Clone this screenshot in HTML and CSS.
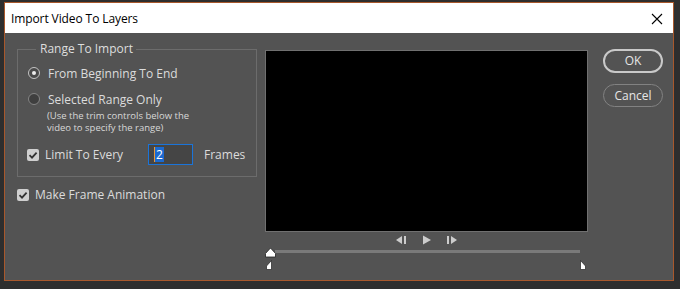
FILE: index.html
```html
<!DOCTYPE html>
<html lang="en">
<head>
    <meta charset="UTF-8">
    <title>Import Video To Layers</title>
    <link rel="stylesheet" href="styles.css">
</head>
<body>

<div class="dialog">

    <div class="titlebar">
        <span class="title">Import Video To Layers</span>
        <svg class="close" width="12" height="12" viewBox="0 0 12 12">
            <path d="M1 1 L11 11 M11 1 L1 11" stroke="#000" stroke-width="1.1" fill="none"/>
        </svg>
    </div>

    <div class="content">

        <div class="leftpane">

            <fieldset class="group">
                <legend>Range To Import</legend>

                <div class="row radioRow">
                    <span class="radio on"></span>
                    <span>From Beginning To End</span>
                </div>

                <div class="row radioRow second">
                    <span class="radio"></span>
                    <span>Selected Range Only</span>
                </div>
                <div class="note">(Use the trim controls below the<br>video to specify the range)</div>

                <div class="row limitRow">
                    <span class="check"><svg width="12" height="12" viewBox="0 0 12 12"><path d="M2.5 6.2 L5 8.6 L9.6 3.6" stroke="#333" stroke-width="1.8" fill="none"/></svg></span>
                    <span class="limitLabel">Limit To Every</span>
                    <span class="numBox"><span class="sel">2</span></span>
                    <span>Frames</span>
                </div>
            </fieldset>

            <div class="row animRow">
                <span class="check"><svg width="12" height="12" viewBox="0 0 12 12"><path d="M2.5 6.2 L5 8.6 L9.6 3.6" stroke="#333" stroke-width="1.8" fill="none"/></svg></span>
                <span>Make Frame Animation</span>
            </div>

        </div>

        <div class="middlepane">
            <div class="video"></div>

            <div class="transport">
                <svg width="12" height="10" viewBox="0 0 12 10"><path d="M0 5 L6 1 L6 9 Z" fill="#ccc"/><rect x="8" y="1" width="2" height="8" fill="#ccc"/></svg>
                <svg width="10" height="10" viewBox="0 0 10 10"><path d="M1 0.5 L9 5 L1 9.5 Z" fill="#ccc"/></svg>
                <svg width="12" height="10" viewBox="0 0 12 10"><rect x="1" y="1" width="2" height="8" fill="#ccc"/><path d="M5 1 L11 5 L5 9 Z" fill="#ccc"/></svg>
            </div>

            <div class="slider">
                <div class="track"></div>
                <svg class="thumb" width="13" height="11" viewBox="0 0 13 11"><path d="M1.5 10 L1.5 6.5 L6.5 1 L11.5 6.5 L11.5 10 Z" fill="#fff" stroke="#222" stroke-width="0.8"/></svg>
            </div>

            <div class="trims">
                <svg width="6" height="10" viewBox="0 0 6 10"><path d="M5.5 0.5 L5.5 9.5 L0.5 9.5 L0.5 6 Z" fill="#fff" stroke="#222" stroke-width="0.7"/></svg>
                <svg width="6" height="10" viewBox="0 0 6 10"><path d="M0.5 0.5 L0.5 9.5 L5.5 9.5 L5.5 6 Z" fill="#fff" stroke="#222" stroke-width="0.7"/></svg>
            </div>
        </div>

        <div class="rightpane">
            <div class="btn primary">OK</div>
            <div class="btn">Cancel</div>
        </div>

    </div>

</div>

</body>
</html>
```

FILE: styles.css
```css
body {
    margin: 0;
    background-color: #2e2e2e;
    font-family: "Open Sans", "Noto Sans", sans-serif;
    font-size: 12px;
}

.dialog {
    width: 668px;
    height: 277px;
    margin: 2px 0 0 4px;
    border: 1px solid #a8582c;
    background-color: #535353;
    color: #dcdcdc;
}

.titlebar {
    height: 30px;
    background-color: #ffffff;
    display: flex;
    align-items: center;
    justify-content: space-between;
    padding: 0 10px 0 6px;
}

.title {
    color: #000;
    font-size: 12px;
    letter-spacing: -0.1px;
}

.close {
    margin-top: 1px;
}

.content {
    display: flex;
    padding-top: 11px;
}

.leftpane {
    width: 240px;
    margin-left: 12px;
}

/* group box */
.group {
    margin: 0;
    padding: 11px 0 11px 9px;
    border: 1px solid #6c6c6c;
    width: 229px;
}

.group legend {
    margin-left: 9px;
    padding: 0 3px 0 4px;
    color: #dedede;
    line-height: 10px;
}

.row {
    display: flex;
    align-items: center;
}

.radioRow {
    height: 16px;
}

.radioRow.second {
    margin-top: 10px;
}

.radio {
    width: 10px;
    height: 10px;
    border: 1px solid #858585;
    border-radius: 50%;
    background-color: #3f3f3f;
    margin-right: 8px;
    margin-left: 1px;
    position: relative;
}

.radio.on {
    border-color: #c4c4c4;
    background-color: #4a4a4a;
}

.radio.on::after {
    content: "";
    position: absolute;
    left: 3px;
    top: 3px;
    width: 4px;
    height: 4px;
    border-radius: 50%;
    background-color: #ececec;
}

.note {
    font-size: 9.5px;
    line-height: 12px;
    margin-left: 20px;
    color: #d8d8d8;
    margin-top: 3px;
}

.limitRow {
    margin-top: 10px;
}

.check {
    width: 12px;
    height: 12px;
    border-radius: 2px;
    background-color: #cfcfcf;
    margin-right: 6px;
    display: flex;
}

.limitLabel {
    width: 103px;
}

.numBox {
    width: 43px;
    height: 19px;
    border: 1px solid #1b74d9;
    background-color: #454545;
    display: flex;
    align-items: center;
    margin-right: 11px;
}

.sel {
    margin-left: 5px;
    padding: 0 1px;
    background-color: #1c6ad0;
    color: #fff;
    border-left: 1px solid #e89a3c;
    line-height: 15px;
}

.animRow {
    margin-top: 9px;
}

/* video area */
.middlepane {
    width: 323px;
    margin-left: 8px;
}

.video {
    height: 180px;
    background-color: #000;
    border: 1px solid #707070;
    margin: 6px 0 0 0;
}

.transport {
    display: flex;
    justify-content: center;
    align-items: center;
    gap: 14px;
    height: 16px;
}

.slider {
    position: relative;
    height: 10px;
}

.track {
    height: 3px;
    background-color: #7a7a7a;
    margin: 2px 8px 0 10px;
}

.thumb {
    position: absolute;
    left: -1px;
    top: -3px;
}

.trims {
    display: flex;
    justify-content: space-between;
    margin: 0 2px 0 1px;
}

/* buttons */
.rightpane {
    margin-left: 15px;
    margin-top: 5px;
    width: 60px;
}

.btn {
    height: 21px;
    border: 1px solid #828282;
    border-radius: 12px;
    text-align: center;
    line-height: 21px;
    color: #e6e6e6;
    margin-bottom: 11px;
}

.btn.primary {
    border: 2px solid #c9c9c9;
    height: 20px;
    line-height: 20px;
}
```
